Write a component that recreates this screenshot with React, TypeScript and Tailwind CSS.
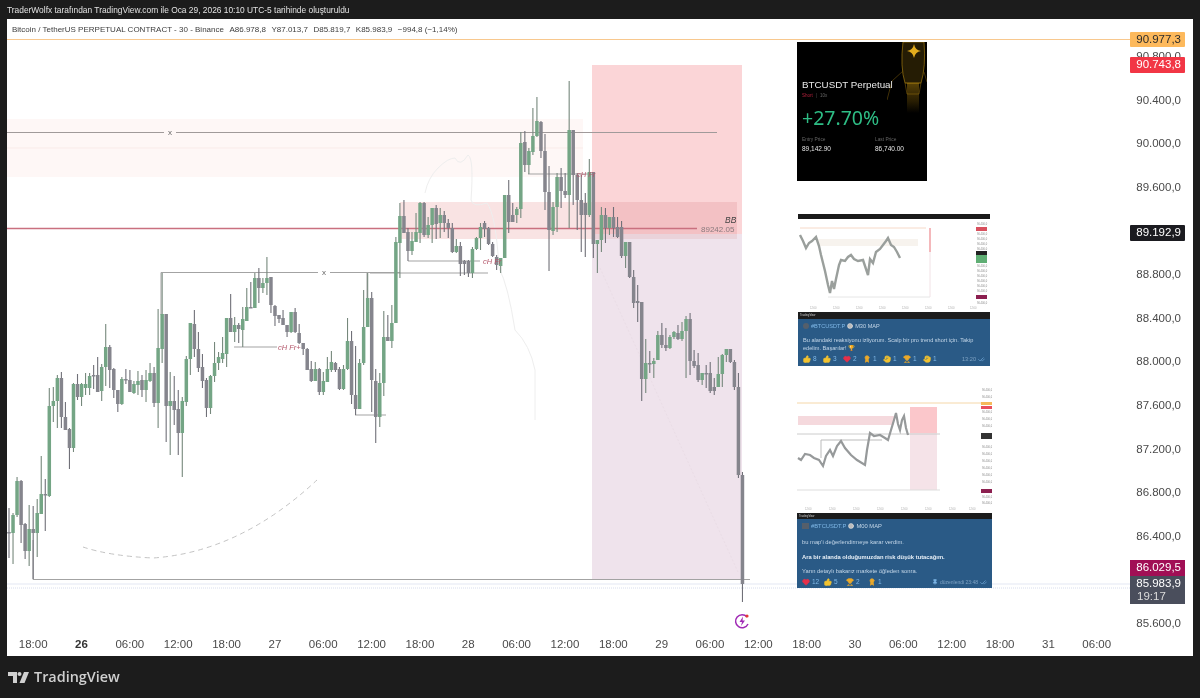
import { Heart, ThumbsUp, Trophy, Hand, Award, Pin, CheckCheck, Clock } from "lucide-react";

// [wick top, wick bottom, body top, body bottom, green?] in page pixels, one per 30m bar
const candles: number[][] = [
  [508,558,532,533,0],[513,564,515,533,1],[477,517,481,515,1],[480,543,481,525,0],[523,559,524,551,0],[505,566,529,551,1],
  [506,579,529,533,0],[499,557,513,533,1],[456,514,494,514,1],[479,531,494,495,0],[388,497,406,496,1],[387,422,401,406,1],
  [375,428,378,401,1],[372,428,378,417,0],[402,430,417,430,0],[428,469,429,448,0],[383,452,384,448,1],[374,400,384,397,0],
  [383,406,384,397,1],[373,395,384,388,1],[373,395,376,388,1],[365,389,375,376,0],[357,392,375,392,0],[364,401,367,391,1],
  [324,386,347,367,1],[345,388,347,370,0],[368,398,369,390,0],[390,412,390,404,0],[377,405,379,404,1],[369,384,379,380,0],
  [370,392,380,392,0],[381,394,384,393,1],[371,395,381,385,1],[375,397,380,390,0],[370,402,380,390,1],[363,382,373,381,1],
  [367,407,373,403,0],[309,428,348,403,1],[273,363,314,349,1],[314,442,314,406,0],[372,455,401,406,1],[376,425,401,410,0],
  [390,455,409,433,0],[397,477,401,433,1],[356,406,359,402,1],[323,375,323,359,1],[310,357,324,349,0],[332,372,349,368,0],
  [354,388,367,381,0],[378,417,380,408,0],[375,414,376,408,1],[342,382,363,376,1],[352,370,357,363,1],[337,363,353,359,1],
  [318,367,318,354,1],[294,332,318,332,0],[317,342,325,332,1],[323,343,325,329,0],[307,347,319,330,1],[288,321,307,321,1],
  [282,308,307,308,0],[273,308,278,308,1],[268,303,278,288,0],[278,293,283,288,1],[257,295,278,283,1],[277,313,277,305,0],
  [305,326,306,316,0],[315,323,315,319,0],[310,325,318,325,0],[325,337,325,332,0],[312,333,312,332,1],[308,333,312,332,0],
  [324,344,333,343,0],[343,355,343,349,0],[348,370,349,370,0],[361,382,369,381,0],[362,381,369,381,1],[368,395,369,392,0],
  [372,395,381,392,1],[357,382,369,382,1],[351,372,362,370,1],[362,372,363,370,0],[367,390,369,389,0],[365,390,369,389,1],
  [318,370,341,369,1],[331,404,341,395,0],[346,415,395,409,0],[359,409,363,409,1],[290,365,327,363,1],[273,327,298,327,1],
  [292,412,298,380,0],[369,443,381,417,0],[373,427,383,417,1],[311,396,337,383,1],[315,340,337,341,0],[305,348,323,341,1],
  [237,323,242,323,1],[203,278,216,243,1],[200,233,216,233,0],[228,261,232,251,0],[232,255,241,251,1],[213,242,232,242,1],
  [202,243,203,233,1],[202,237,203,235,0],[217,238,225,235,1],[208,243,208,225,1],[205,239,208,224,0],[208,238,215,223,1],
  [211,232,215,223,0],[219,238,223,228,0],[223,253,228,252,0],[239,253,246,252,1],[242,276,246,264,0],[260,275,261,264,0],
  [260,277,261,273,0],[247,278,249,273,1],[237,250,238,249,1],[223,250,227,238,1],[221,237,223,229,0],[227,245,228,244,0],
  [242,257,244,256,0],[255,270,257,265,0],[258,273,258,266,1],[195,258,195,258,1],[180,233,195,222,0],[203,222,215,222,0],
  [207,223,209,215,1],[132,218,143,209,1],[131,172,142,165,0],[148,174,151,165,1],[108,155,136,152,1],[97,137,121,136,1],
  [121,158,122,151,0],[134,210,151,192,0],[166,271,192,230,0],[202,235,207,231,1],[173,232,177,207,1],[168,208,177,191,0],
  [173,198,191,195,0],[81,228,130,195,1],[130,205,130,175,0],[173,230,175,200,0],[175,252,200,215,0],[193,257,203,215,0],
  [159,217,172,215,1],[172,258,172,244,0],[240,273,240,244,1],[207,252,215,240,1],[208,243,215,228,0],[217,235,217,228,1],
  [207,237,217,228,0],[217,238,227,237,0],[221,258,227,256,0],[242,268,242,256,1],[242,278,242,277,0],[270,308,277,303,0],
  [285,322,301,303,0],[302,401,302,379,0],[339,393,363,379,1],[351,373,363,364,0],[358,378,361,364,1],[331,360,335,360,1],
  [323,348,335,345,0],[328,351,345,348,0],[335,349,337,348,1],[331,339,332,337,1],[325,340,333,339,0],[322,341,331,339,1],
  [316,378,319,331,1],[313,375,319,361,0],[350,368,361,366,0],[353,382,365,380,0],[373,385,373,380,1],[365,388,373,374,0],
  [362,393,373,391,0],[378,395,387,391,0],[357,387,374,387,1],[354,387,355,374,1],[349,362,349,355,1],[349,363,349,362,0],
  [360,390,362,387,0],[373,478,387,475,0],[472,602,475,584,0],
];

const times = ["18:00","26","06:00","12:00","18:00","27","06:00","12:00","18:00","28","06:00","12:00","18:00","29","06:00","12:00","18:00","30","06:00","12:00","18:00","31","06:00"];
// 89.200 and 86.000 sit under the price tags, so those rows stay empty
const ticks = ["90.800,0","90.400,0","90.000,0","89.600,0","","88.800,0","88.400,0","88.000,0","87.600,0","87.200,0","86.800,0","86.400,0","","85.600,0"];

const ChartDrawing = () => (
  <svg className="absolute inset-0" width={1123} height={611} viewBox="7 19 1123 611">
    <rect x="7" y="119" width="576" height="58" fill="#fef7f6" />
    <line x1="7" x2="583" y1="148" y2="148" stroke="#f9ebe9" />
    <rect x="592" y="65" width="150" height="169" fill="#fbd5d7" />
    <rect x="592" y="234" width="150" height="345" fill="#efe3ec" />
    <rect x="400" y="202" width="192" height="37" fill="#f9e3e3" />
    <rect x="592" y="202" width="145" height="32" fill="#f3c1c4" />
    <rect x="592" y="234" width="145" height="5" fill="#ead3da" />
    <line x1="7" x2="1130" y1="39.5" y2="39.5" stroke="#f8c88e" strokeWidth="1.2" />
    <line x1="7" x2="1130" y1="584" y2="584" stroke="#e3e7f3" />
    <line x1="7" x2="1130" y1="588" y2="588" stroke="#d9deee" strokeDasharray="1 1" />
    <line x1="600" y1="268" x2="738" y2="572" stroke="#eadde6" strokeDasharray="2 2" />
    <path d="M425 193 Q428 178 438 168 T455 158 Q460 168 468 155 Q474 158 471 200 Q473 208 487 203 Q496 215 499 268 Q508 285 515 330 Q530 345 535 370 V420" fill="none" stroke="#eeeeee" />
    <path d="M83 547 Q 110 556 153 558 Q 240 552 317 480" fill="none" stroke="#c4c4c4" strokeDasharray="5 4" />
    <line x1="7" x2="717" y1="132.5" y2="132.5" stroke="#a09a9a" />
    <rect x="164" y="128" width="12" height="9" fill="#fef7f6" />
    <text x="170" y="135" textAnchor="middle" fontSize="8" fill="#666">x</text>
    <polyline fill="none" stroke="#a3a3a3" points="161,315 161,272.5 400,272.5" />
    <line x1="367" x2="367" y1="272" y2="300" stroke="#a3a3a3" />
    <rect x="318" y="268" width="12" height="9" fill="#fff" />
    <text x="324" y="275" textAnchor="middle" fontSize="8" fill="#666">x</text>
    <line x1="234" x2="277" y1="347" y2="347" stroke="#a3a3a3" />
    <line x1="355" x2="386" y1="415" y2="415" stroke="#a3a3a3" />
    <line x1="408" x2="480" y1="261" y2="261" stroke="#a3a3a3" />
    <line x1="370" x2="488" y1="273" y2="273" stroke="#a3a3a3" />
    <line x1="528" x2="590" y1="174" y2="174" stroke="#a3a3a3" />
    <polyline fill="none" stroke="#a3a3a3" points="33,540 33,579.5 750,579.5" />
    <line x1="7" x2="697" y1="228.5" y2="228.5" stroke="#c9707f" strokeWidth="1.5" />
    {candles.map(([wt, wb, bt, bb, up], i) => {
      const x = 9 + 4.03 * i;
      return (
        <g key={i}>
          <line x1={x} x2={x} y1={wt} y2={wb} stroke={up ? "#76887c" : "#707078"} strokeWidth="1.1" />
          <rect x={x - 1.75} y={bt} width="3.5" height={Math.max(bb - bt, 1.5)} fill={up ? "#74a585" : "#85858d"} />
        </g>
      );
    })}
    <g fontFamily="Liberation Sans, sans-serif" fontStyle="italic" fill="#b4566a" fontSize="7.5">
      <text x="278" y="349.5">cH Fr+</text>
      <text x="483" y="263.5">cH Fr</text>
      <text x="577" y="176.5">cH Fr</text>
    </g>
    <text x="725" y="223" fontFamily="Liberation Sans, sans-serif" fontStyle="italic" fontSize="8.5" fill="#444">BB</text>
    <text x="701" y="231.5" fontFamily="Liberation Sans, sans-serif" fontSize="8" fill="#8a7a7e">89242.05</text>
    <path d="M747 617 A6.5 6.5 0 1 0 748 624" fill="none" stroke="#a02ab5" strokeWidth="1.5" />
    <path d="M743 616.5 L739.5 622 H742 L741 626 L745 620.5 H742.5Z" fill="#a02ab5" />
    <circle cx="747" cy="616" r="1.6" fill="#e53935" />
  </svg>
);

const RocketArt = () => (
  <svg className="absolute right-0 top-0" width={40} height={75} viewBox="0 0 40 75">
    <defs>
      <linearGradient id="glow" x1="0" y1="0" x2="0" y2="1">
        <stop offset="0" stopColor="#c8950f" stopOpacity="0.45" />
        <stop offset="0.6" stopColor="#8a6508" stopOpacity="0.3" />
        <stop offset="1" stopColor="#8a6508" stopOpacity="0" />
      </linearGradient>
    </defs>
    <path d="M16 0 Q13 25 18 41 H34 Q39 25 37 0Z" fill="#251c04" stroke="#a07a10" strokeWidth="0.7" />
    <path d="M18 41 L20 52 H32 L34 41Z" fill="none" stroke="#7d5e0d" strokeWidth="0.6" />
    <rect x="20" y="41" width="12" height="30" fill="url(#glow)" />
    <path d="M16 29 L5 39 L0 58" fill="none" stroke="#6e530c" strokeWidth="0.6" />
    <path d="M37 30 L40 40" fill="none" stroke="#6e530c" strokeWidth="0.6" />
    <path d="M27 2 Q28 8 34 9 Q28 10 27 16 Q26 10 20 9 Q26 8 27 2Z" fill="#e3ac1d" />
  </svg>
);

const MiniChartOne = () => (
  <svg width={192} height={93} viewBox="0 0 192 93" className="block">
    <line x1="2" x2="128" y1="9" y2="9" stroke="#f6d9c8" />
    <rect x="20" y="20" width="100" height="7" fill="#f7f3ee" />
    <line x1="132" x2="132" y1="9" y2="33" stroke="#f0a0a4" strokeWidth="1.5" />
    <line x1="132" x2="132" y1="33" y2="78" stroke="#f2e2e6" />
    <line x1="30" x2="132" y1="78" y2="78" stroke="#e6e6e6" />
    <polyline fill="none" stroke="#9a9f9c" strokeWidth="2.4" points="2,16 5,22 8,29 11,24 14,22 18,18 21,27 23,36 27,52 30,66 32,74 34,62 36,70 38,60 41,46 43,41 47,42 50,38 53,36 56,40 60,42 65,41 68,50 70,56 72,40 75,44 78,33 82,30 85,26 88,22 90,19 93,26 96,28 99,33 102,39" />
    <g fill="#888" fontSize="2.6" fontFamily="Liberation Sans, sans-serif">
      {[4, 14, 19, 24, 29, 46, 51, 56, 61, 66, 71, 83].map((y) => (
        <text key={y} x="179" y={y + 2}>90.400,0</text>
      ))}
    </g>
    <rect x="178" y="8" width="11" height="4" fill="#d8505e" />
    <rect x="178" y="32" width="11" height="4" fill="#222" />
    <rect x="178" y="36" width="11" height="8" fill="#5fae74" />
    <rect x="178" y="76" width="11" height="4" fill="#8c2050" />
    <g fill="#aaa" fontSize="2.6" fontFamily="Liberation Sans, sans-serif">
      {[12, 35, 58, 81, 104, 127, 150, 172].map((x) => (
        <text key={x} x={x} y="90">12:00</text>
      ))}
    </g>
  </svg>
);

const MiniChartTwo = () => (
  <svg width={195} height={125} viewBox="0 0 195 125" className="block">
    <line x1="0" x2="184" y1="15" y2="15" stroke="#f5d7a8" />
    <rect x="1" y="28" width="96" height="9" fill="#f5d9dd" />
    <rect x="113" y="19" width="27" height="26" fill="#fbc7cb" />
    <rect x="113" y="45" width="27" height="57" fill="#f5e3e8" />
    <line x1="0" x2="143" y1="46" y2="46" stroke="#ccc" />
    <line x1="0" x2="143" y1="102" y2="102" stroke="#ddd" />
    <polyline fill="none" stroke="#bbb" points="24,70 24,52 85,52" />
    <polyline fill="none" stroke="#96999a" strokeWidth="2.2" points="1,70 4,72 8,66 13,67 17,70 22,72 26,78 29,68 33,62 36,68 40,58 44,53 48,60 54,67 60,72 68,77 70,62 73,45 77,48 83,47 88,50 91,52 94,42 97,32 99,25 101,36 103,42 105,32 107,28 109,40 111,47" />
    <g fill="#888" fontSize="2.6" fontFamily="Liberation Sans, sans-serif">
      {[3, 10, 25, 32, 39, 60, 67, 74, 81, 88, 95, 110, 116].map((y) => (
        <text key={y} x="185" y={y}>90.400,0</text>
      ))}
    </g>
    <rect x="184" y="14" width="11" height="3" fill="#f6b95a" />
    <rect x="184" y="18" width="11" height="3" fill="#e8505e" />
    <rect x="184" y="45" width="11" height="6" fill="#333" />
    <rect x="184" y="101" width="11" height="4" fill="#8c2050" />
    <g fill="#aaa" fontSize="2.6" fontFamily="Liberation Sans, sans-serif">
      {[8, 32, 56, 80, 104, 128, 152, 172].map((x) => (
        <text key={x} x={x} y="122">12:00</text>
      ))}
    </g>
  </svg>
);

const Reaction = ({ icon, n, w }: { icon: React.ReactNode; n: number; w: string }) => (
  <span className={`flex items-center gap-[2px] text-[#7fb7e6] text-[6.5px] ${w}`}>
    {icon}
    <span>{n}</span>
  </span>
);

const up = <ThumbsUp size={8} className="fill-[#f2c230] text-[#f2c230]" />;
const heart = <Heart size={8} className="fill-[#e5304a] text-[#e5304a]" />;
const cup = <Trophy size={8} className="fill-[#eba92b] text-[#eba92b]" />;
const hand = <Hand size={8} className="fill-[#f2c230] text-[#f2c230]" />;
const medal = <Award size={8} className="fill-[#eba92b] text-[#eba92b]" />;

const App = () => {
  return (
    <div className="w-[1200px] h-[698px] overflow-hidden flex flex-col bg-[#1c1c1c] blur-[0.4px] font-['Liberation_Sans',sans-serif]">
      <div className="h-[19px] pl-[7px] pt-[1px] flex items-center text-[8.4px] text-[#e2e2e2]">
        TraderWolfx tarafından TradingView.com ile Oca 29, 2026 10:10 UTC-5 tarihinde oluşturuldu
      </div>

      <div className="mx-[7px] h-[637px] bg-white flex flex-col">
        <div className="flex h-[611px]">
          <div className="relative w-[1123px]">
            <ChartDrawing />
            <div className="relative pl-[5px] pt-[5px] text-[8px] text-[#3d3d3d] flex gap-[5.5px] whitespace-nowrap">
              <span>Bitcoin / TetherUS PERPETUAL CONTRACT - 30 - Binance</span>
              <span>A86.978,8</span>
              <span>Y87.013,7</span>
              <span>D85.819,7</span>
              <span>K85.983,9</span>
              <span>−994,8 (−1,14%)</span>
            </div>

            <div className="absolute left-[790px] top-[23px] w-[130px] h-[139px] bg-black px-[5px] overflow-hidden">
              <RocketArt />
              <div className="relative mt-[37px] text-[9.8px] leading-[12px] text-[#e8e8e8] whitespace-nowrap">BTCUSDT Perpetual</div>
              <div className="flex items-center gap-[3px] mt-[2px] text-[4.5px] leading-[6px]">
                <span className="text-[#b3203c]">Short</span>
                <span className="text-[#555]">|</span>
                <span className="text-[#666]">10x</span>
              </div>
              <div className="mt-[7px] text-[19.5px] leading-[24px] text-[#2ebd85] font-['Noto_Sans',sans-serif]">+27.70%</div>
              <div className="flex mt-[7px] text-[4.8px] leading-[6px] text-[#666]">
                <span className="w-[73px]">Entry Price</span>
                <span>Last Price</span>
              </div>
              <div className="flex mt-[1px] text-[6.5px] leading-[10px] text-[#e4e4e4]">
                <span className="w-[73px]">89,142.90</span>
                <span>86,740.00</span>
              </div>
            </div>

            <div className="absolute left-[791px] top-[195px] w-[192px] h-[152px] flex flex-col bg-[#2a5a86] overflow-hidden">
              <div className="h-[5px] bg-[#1a1a1a]" />
              <div className="h-[93px] bg-white"><MiniChartOne /></div>
              <div className="h-[7px] bg-[#1c1c1c] pl-[2px] text-[2.8px] leading-[7px] text-[#ccc]">TradingView</div>
              <div className="flex-1 px-[5px] text-[5.6px] leading-[8px] text-[#c3d6e8]">
                <div className="flex items-center gap-[2px] mt-[3px]">
                  <span className="w-[6px] h-[6px] rounded-full bg-[#555f6b]" />
                  <span className="text-[#7fb7e6]">#BTCUSDT.P</span>
                  <Clock size={6} className="text-[#eee] fill-[#bbb]" />
                  <span>M30 MAP</span>
                </div>
                <div className="mt-[6px] pr-[8px]">Bu alandaki reaksiyonu izliyorum. Scalp bir pro trend short için. Takip edelim. Başarılar! 🏆</div>
                <div className="flex items-center mt-[3px]">
                  <Reaction w="w-[20px]" icon={up} n={8} />
                  <Reaction w="w-[20px]" icon={up} n={3} />
                  <Reaction w="w-[20px]" icon={heart} n={2} />
                  <Reaction w="w-[20px]" icon={medal} n={1} />
                  <Reaction w="w-[20px]" icon={hand} n={1} />
                  <Reaction w="w-[20px]" icon={cup} n={1} />
                  <Reaction w="w-[20px]" icon={hand} n={1} />
                  <span className="ml-auto text-[#7fa3c4] flex items-center gap-[2px]">13:20 <CheckCheck size={7} className="text-[#7fb7e6]" /></span>
                </div>
              </div>
            </div>

            <div className="absolute left-[790px] top-[369px] w-[195px] h-[200px] flex flex-col bg-[#2a5a86] overflow-hidden">
              <div className="h-[125px] bg-white"><MiniChartTwo /></div>
              <div className="h-[6px] bg-[#1c1c1c] pl-[2px] text-[2.8px] leading-[6px] text-[#ccc]">TradingView</div>
              <div className="flex-1 px-[5px] text-[5.8px] leading-[8px] text-[#c3d6e8]">
                <div className="flex items-center gap-[2px] mt-[3px]">
                  <span className="w-[7px] h-[6px] bg-[#555f6b]" />
                  <span className="text-[#7fb7e6]">#BTCUSDT.P</span>
                  <Clock size={6} className="text-[#eee] fill-[#bbb]" />
                  <span>M00 MAP</span>
                </div>
                <div className="mt-[8px]">bu map&apos;i değerlendirmeye karar verdim.</div>
                <div className="mt-[7px] font-bold text-[#e6eef6]">Ara bir alanda olduğumuzdan risk düşük tutacağım.</div>
                <div className="mt-[6px]">Yarın detaylı bakarız markete öğleden sonra.</div>
                <div className="flex items-center mt-[3px]">
                  <Reaction w="w-[22px]" icon={heart} n={12} />
                  <Reaction w="w-[22px]" icon={up} n={5} />
                  <Reaction w="w-[22px]" icon={cup} n={2} />
                  <Reaction w="w-[22px]" icon={medal} n={1} />
                  <span className="ml-auto text-[#7fa3c4] flex items-center gap-[2px] text-[5px]">
                    <Pin size={6} className="text-[#7fb7e6] fill-[#7fb7e6]" /> düzenlendi 23:48 <CheckCheck size={7} className="text-[#7fb7e6]" />
                  </span>
                </div>
              </div>
            </div>
          </div>

          <div className="relative w-[63px] pt-[16px] text-[11.5px] text-[#4a4a4a]">
            {ticks.map((t, i) => (
              <div key={i} className="h-[43.6px] flex items-center justify-end pr-[12px]">{t}</div>
            ))}
            <div className="absolute left-0 top-[13px] w-[55px] h-[15px] flex items-center justify-end pr-[4px] rounded-[1px] bg-[#fdb95c] text-[#2b2b2b]">90.977,3</div>
            <div className="absolute left-0 top-[38px] w-[55px] h-[16px] flex items-center justify-end pr-[4px] rounded-[1px] bg-[#f23645] text-white">90.743,8</div>
            <div className="absolute left-0 top-[206px] w-[55px] h-[16px] flex items-center justify-end pr-[4px] rounded-[1px] bg-[#1b1b20] text-white">89.192,9</div>
            <div className="absolute left-0 top-[541px] w-[55px] h-[16px] flex items-center justify-end pr-[4px] bg-[#a10f55] text-white">86.029,5</div>
            <div className="absolute left-0 top-[557px] w-[55px] h-[28px] flex flex-col justify-center items-end pr-[4px] leading-[13px] bg-[#4a4e5c] text-white">
              <span>85.983,9</span>
              <span className="text-[#dcdcdc] w-full pl-[7px]">19:17</span>
            </div>
          </div>
        </div>

        <div className="flex-1 flex items-start pt-[6px] pl-[2px] text-[11.5px] text-[#4a4a4a]">
          {times.map((t, i) => (
            <span key={i} className={`w-[48.35px] shrink-0 text-center ${t === "26" ? "font-bold text-[#333]" : ""}`}>{t}</span>
          ))}
        </div>
      </div>

      <div className="flex-1 flex items-center gap-[5px] pl-[8px]">
        <svg width="21" height="11" viewBox="0 0 21 11" fill="#d0d0d0">
          <path d="M0 0H9V11H5V4H0Z" />
          <circle cx="11.5" cy="2" r="2" />
          <path d="M16 0H21L16.5 11H11.5Z" />
        </svg>
        <span className="text-[14.4px] font-semibold text-[#cfcfcf] font-['Open_Sans',sans-serif]">TradingView</span>
      </div>
    </div>
  );
};

export default App;
